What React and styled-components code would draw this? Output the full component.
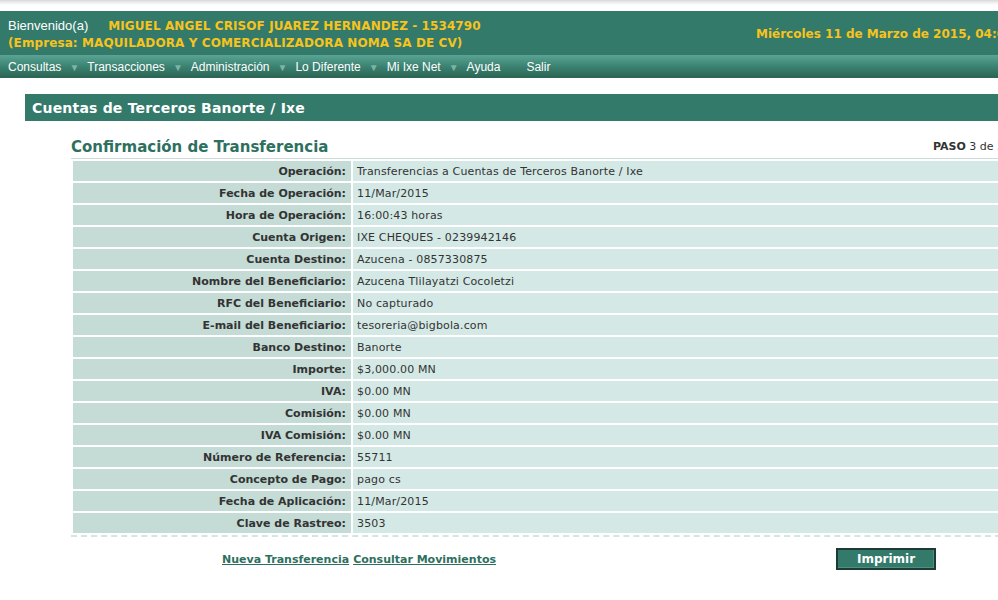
import React from "react";
import styled, { createGlobalStyle } from "styled-components";

const Global = createGlobalStyle`
  html, body { margin: 0; padding: 0; background: #fff; overflow: hidden; }
  body { font-family: "DejaVu Sans", Verdana, sans-serif; color: #333; }
`;

const Page = styled.div`
  width: 1080px;
  background: linear-gradient(#d9d9d9 0, #f2f2f2 3px, #fff 5px) no-repeat;
  background-size: 100% 11px;
  padding-top: 11px;
`;

const Header = styled.header`
  background: #337a6b;
  height: 44px;
  display: flex;
  align-items: center;
  box-sizing: border-box;
  padding: 0 8px;
`;

const Welcome = styled.div`
  width: 748px;
  line-height: 15px;
  padding-top: 1px;
`;

const Hello = styled.span`
  font-family: "Liberation Sans", Arial, sans-serif;
  font-size: 13px;
  color: #fff;
  margin-right: 20px;
`;

const Yellow = styled.span`
  font-family: "DejaVu Sans", Verdana, sans-serif;
  font-weight: bold;
  font-size: 12px;
  color: #f7c31c;
  white-space: nowrap;
  letter-spacing: 0.1px;
`;

const DateText = styled(Yellow)`
  padding-top: 2px;
  letter-spacing: 0;
`;

const Nav = styled.nav`
  height: 23px;
  background: linear-gradient(#5ba394 0%, #3d8574 45%, #2a6453 100%);
  display: flex;
  align-items: center;
  padding-left: 8px;
`;

const NavItem = styled.span`
  font-family: "Liberation Sans", Arial, sans-serif;
  font-size: 12px;
  color: #fff;
  display: flex;
  align-items: center;
  margin-right: ${(p) => (p.$arrow ? "8px" : "26px")};
`;

const Arrow = styled.span`
  font-size: 10px;
  color: #7db3a5;
  margin-left: 8px;
  padding-top: 1px;
`;

const Section = styled.div`
  margin: 16px 0 0 25px;
  height: 27px;
  background: #337a6b;
  display: flex;
  align-items: center;
  padding-left: 7px;
  font-weight: bold;
  font-size: 14px;
  color: #fff;
  letter-spacing: 0.2px;
`;

const Content = styled.div`
  margin-left: 71px;
  width: 940px;
`;

const TitleRow = styled.div`
  display: flex;
  align-items: flex-end;
  justify-content: space-between;
  border-bottom: 1px solid #cfdbd8;
  padding-top: 14px;
  height: 23px;
`;

const Title = styled.h2`
  margin: 0;
  font-size: 15px;
  font-weight: bold;
  color: #2e7060;
  line-height: 22px;
`;

const Step = styled.div`
  font-size: 11px;
  color: #333;
  line-height: 14px;
  padding-bottom: 4px;
  margin-right: 7px;
  b { font-weight: bold; }
`;

const Table = styled.table`
  border-collapse: separate;
  border-spacing: 2px;
  width: 100%;
  border-bottom: 2px dashed #d0e8e2;
`;

const Label = styled.td`
  width: 273px;
  height: 20px;
  padding: 0 5px 0 0;
  background: #c4dbd6;
  text-align: right;
  font-weight: bold;
  font-size: 11px;
  color: #333;
  white-space: nowrap;
`;

const Value = styled.td`
  height: 20px;
  padding: 0 0 0 4px;
  background: #d4e9e5;
  font-size: 11px;
  color: #333;
  white-space: nowrap;
  letter-spacing: 0.15px;
`;

const Footer = styled.div`
  display: flex;
  align-items: center;
  height: 44px;
  padding-left: 151px;
  padding-bottom: 4px;
`;

const Links = styled.div`
  display: flex;
  gap: 4px;
  width: 614px;
`;

const Link = styled.a`
  font-size: 11px;
  font-weight: bold;
  color: #2e7060;
  text-decoration: underline;
  cursor: pointer;
`;

const Button = styled.button`
  width: 100px;
  height: 22px;
  background: #337a6b;
  border: 2px solid #1c3b34;
  box-shadow: inset -1px -1px 0 #4f8f80;
  color: #fff;
  font-family: "DejaVu Sans", Verdana, sans-serif;
  font-weight: bold;
  font-size: 12px;
  padding: 0;
`;

const rows = [
  ["Operación:", "Transferencias a Cuentas de Terceros Banorte / Ixe"],
  ["Fecha de Operación:", "11/Mar/2015"],
  ["Hora de Operación:", "16:00:43 horas"],
  ["Cuenta Origen:", "IXE CHEQUES - 0239942146"],
  ["Cuenta Destino:", "Azucena - 0857330875"],
  ["Nombre del Beneficiario:", "Azucena Tlilayatzi Cocoletzi"],
  ["RFC del Beneficiario:", "No capturado"],
  ["E-mail del Beneficiario:", "tesoreria@bigbola.com"],
  ["Banco Destino:", "Banorte"],
  ["Importe:", "$3,000.00 MN"],
  ["IVA:", "$0.00 MN"],
  ["Comisión:", "$0.00 MN"],
  ["IVA Comisión:", "$0.00 MN"],
  ["Número de Referencia:", "55711"],
  ["Concepto de Pago:", "pago cs"],
  ["Fecha de Aplicación:", "11/Mar/2015"],
  ["Clave de Rastreo:", "3503"],
];

const navItems = [
  ["Consultas", true],
  ["Transacciones", true],
  ["Administración", true],
  ["Lo Diferente", true],
  ["Mi Ixe Net", true],
  ["Ayuda", false],
  ["Salir", false],
];

export default function App() {
  return (
    <Page>
      <Global />
      <Header>
        <Welcome>
          <Hello>Bienvenido(a)</Hello>
          <Yellow>MIGUEL ANGEL CRISOF JUAREZ HERNANDEZ - 1534790</Yellow>
          <br />
          <Yellow>(Empresa: MAQUILADORA Y COMERCIALIZADORA NOMA SA DE CV)</Yellow>
        </Welcome>
        <DateText>Miércoles 11 de Marzo de 2015, 04:00 PM</DateText>
      </Header>
      <Nav>
        {navItems.map(([t, a]) => (
          <NavItem key={t} $arrow={a}>
            {t}
            {a && <Arrow>▼</Arrow>}
          </NavItem>
        ))}
      </Nav>
      <Section>Cuentas de Terceros Banorte / Ixe</Section>
      <Content>
        <TitleRow>
          <Title>Confirmación de Transferencia</Title>
          <Step>
            <b>PASO</b> 3 de 3
          </Step>
        </TitleRow>
        <Table>
          <tbody>
            {rows.map(([l, v]) => (
              <tr key={l}>
                <Label>{l}</Label>
                <Value>{v}</Value>
              </tr>
            ))}
          </tbody>
        </Table>
        <Footer>
          <Links>
            <Link>Nueva Transferencia</Link>
            <Link>Consultar Movimientos</Link>
          </Links>
          <Button>Imprimir</Button>
        </Footer>
      </Content>
    </Page>
  );
}
